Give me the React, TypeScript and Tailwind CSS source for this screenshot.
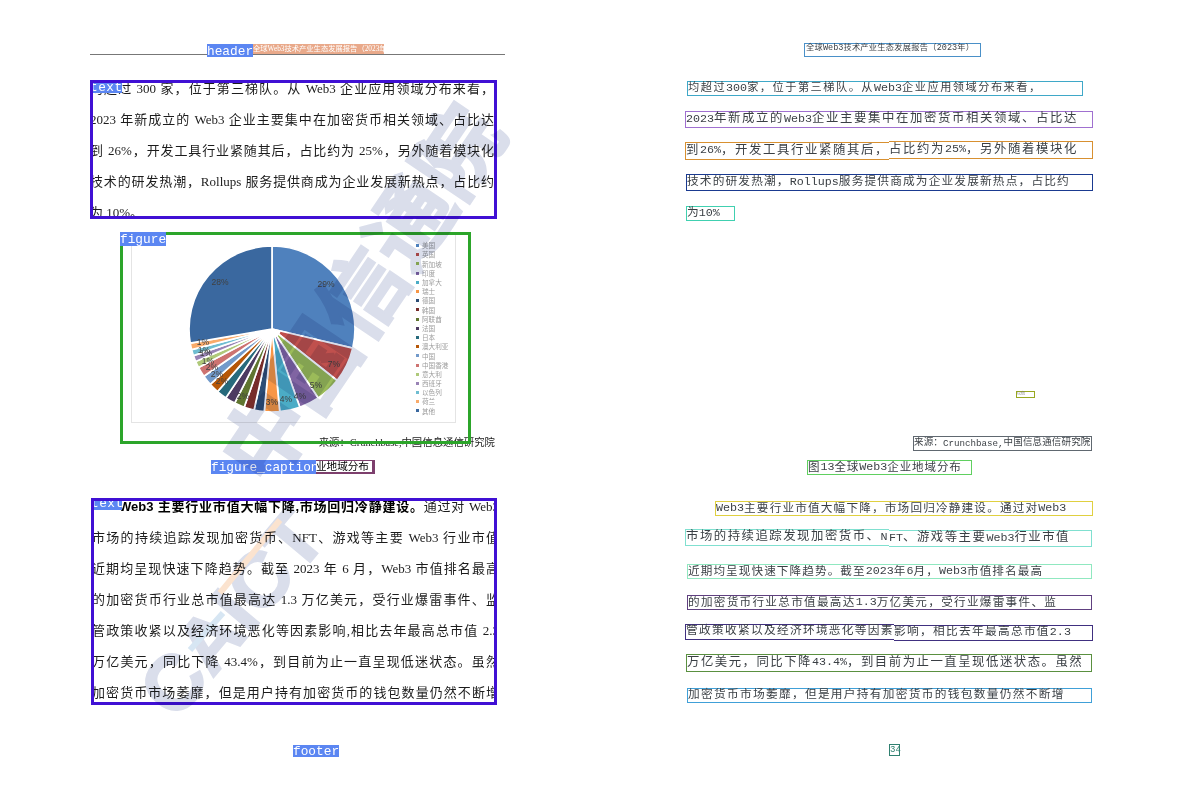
const BODY_FONT = "font-['Liberation_Serif','Noto_Sans_CJK_SC',serif]";
const MONO_FONT = "font-['Liberation_Mono','Noto_Sans_CJK_SC',monospace]";

const slices = [
  { pct: 29, color: "#4f81bd", label: "29%", lx: 54, ly: -42 },
  { pct: 7, color: "#c0504d", label: "7%", lx: 62, ly: 38 },
  { pct: 5, color: "#9bbb59", label: "5%", lx: 44, ly: 59 },
  { pct: 4, color: "#8064a2", label: "4%", lx: 28, ly: 70 },
  { pct: 4, color: "#4bacc6", label: "4%", lx: 14, ly: 73 },
  { pct: 3, color: "#f79646", label: "3%", lx: 0, ly: 76 },
  { pct: 2, color: "#2c4d75", label: "", lx: 0, ly: 0 },
  { pct: 2, color: "#772c2a", label: "", lx: 0, ly: 0 },
  { pct: 2, color: "#5f7530", label: "2%", lx: -29, ly: 70 },
  { pct: 2, color: "#4d3b62", label: "", lx: 0, ly: 0 },
  { pct: 2, color: "#276a7c", label: "", lx: 0, ly: 0 },
  { pct: 2, color: "#b65708", label: "2%", lx: -50, ly: 55 },
  { pct: 2, color: "#729aca", label: "2%", lx: -55, ly: 48 },
  { pct: 2, color: "#cd7371", label: "2%", lx: -60, ly: 41 },
  { pct: 1.3, color: "#afc97a", label: "1%", lx: -64, ly: 35 },
  { pct: 1.2, color: "#9983b5", label: "1%", lx: -66, ly: 27 },
  { pct: 1.2, color: "#6fbdd1", label: "1%", lx: -68, ly: 24 },
  { pct: 1.3, color: "#f9ab6b", label: "1%", lx: -69, ly: 16 },
  { pct: 28, color: "#3a689f", label: "28%", lx: -52, ly: -44 },
];

const legend = [
  { name: "美国", color: "#4f81bd" },
  { name: "英国", color: "#c0504d" },
  { name: "新加坡", color: "#9bbb59" },
  { name: "印度", color: "#8064a2" },
  { name: "加拿大", color: "#4bacc6" },
  { name: "瑞士", color: "#f79646" },
  { name: "德国", color: "#2c4d75" },
  { name: "韩国", color: "#772c2a" },
  { name: "阿联酋", color: "#5f7530" },
  { name: "法国", color: "#4d3b62" },
  { name: "日本", color: "#276a7c" },
  { name: "澳大利亚", color: "#b65708" },
  { name: "中国", color: "#729aca" },
  { name: "中国香港", color: "#cd7371" },
  { name: "意大利", color: "#afc97a" },
  { name: "西班牙", color: "#9983b5" },
  { name: "以色列", color: "#6fbdd1" },
  { name: "荷兰", color: "#f9ab6b" },
  { name: "其他", color: "#3a689f" },
];

function PieChart() {
  const total = slices.reduce((sum, s) => sum + s.pct, 0);
  const r = 83;
  let angle = 0;
  const paths = slices.map(s => {
    const start = angle;
    angle += (s.pct / total) * Math.PI * 2;
    const x1 = Math.sin(start) * r;
    const y1 = -Math.cos(start) * r;
    const x2 = Math.sin(angle) * r;
    const y2 = -Math.cos(angle) * r;
    const large = angle - start > Math.PI ? 1 : 0;
    return { color: s.color, d: `M0 0L${x1} ${y1}A${r} ${r} 0 ${large} 1 ${x2} ${y2}Z` };
  });
  // the thin slices fade into a white hub, the two big ones run right to the centre
  const hubFrom = (104 * Math.PI) / 180;
  const hubTo = (261 * Math.PI) / 180;
  const hub = 9;
  return (
    <svg width="170" height="170" viewBox="-85 -85 170 170" className="block">
      {paths.map(p => (
        <path key={p.d} d={p.d} fill={p.color} stroke="#ffffff" strokeWidth="1.7" />
      ))}
      <path
        d={`M0 0L${Math.sin(hubFrom) * hub} ${-Math.cos(hubFrom) * hub}A${hub} ${hub} 0 0 1 ${Math.sin(hubTo) * hub} ${-Math.cos(hubTo) * hub}Z`}
        fill="#ffffff"
      />
      {slices.map((s, i) =>
        s.label ? (
          <text key={i} x={s.lx} y={s.ly} textAnchor="middle" fontSize="8.5" fill="#404040" fontFamily="Liberation Sans">
            {s.label}
          </text>
        ) : null
      )}
    </svg>
  );
}

function Tag({ children, className }: { children: string; className: string }) {
  return (
    <span className={`${MONO_FONT} absolute z-10 bg-[#5b86f2] text-white text-[12.8px] ${className}`}>
      {children}
    </span>
  );
}

function JustLine({ children, className = "" }: { children: React.ReactNode; className?: string }) {
  return (
    <div className={`h-[31px] leading-[31px] text-justify [text-align-last:justify] whitespace-nowrap ${className}`}>
      {children}
    </div>
  );
}

function LeftPage() {
  return (
    <div className={`w-[415px] flex flex-col text-[13px] text-[#1c1c1c] ${BODY_FONT}`}>
      <div className="mt-[44px] h-[11px] border-b border-[#777777] flex pl-[117px]">
        <span className={`${MONO_FONT} h-[13px] w-[46px] bg-[#5b86f2] text-white text-[12.8px] leading-[15px] overflow-hidden`}>header</span>
        <span className="h-[10px] w-[131px] bg-[#e9a98a] text-white text-[7.3px] leading-[9px] text-center overflow-hidden whitespace-nowrap">
          全球Web3技术产业生态发展报告（2023年）
        </span>
      </div>

      <div className="relative mt-[25px] w-[407px] h-[139px] border-[3px] border-[#4010d4] overflow-hidden">
        <Tag className="w-[32px] h-[13px] -left-[3px] -top-[3px] leading-[15px] tracking-[0.5px]">text</Tag>
        <div className="-mt-[10px] -ml-[3px] w-[404px]">
          <JustLine>均超过 300 家，位于第三梯队。从 Web3 企业应用领域分布来看，</JustLine>
          <JustLine>2023 年新成立的 Web3 企业主要集中在加密货币相关领域、占比达</JustLine>
          <JustLine>到 26%，开发工具行业紧随其后，占比约为 25%，另外随着模块化</JustLine>
          <JustLine>技术的研发热潮，Rollups 服务提供商成为企业发展新热点，占比约</JustLine>
          <div className="h-[31px] leading-[31px]">为 10%。</div>
        </div>
      </div>

      <div className="relative mt-[13px] ml-[30px] w-[351px] h-[212px] border-[3px] border-[#2ca52a] pl-[8px]">
        <Tag className="w-[46px] h-[14px] -left-[3px] -top-[3px] leading-[16px]">figure</Tag>
        <div className="flex w-[325px] h-[188px] border-b border-r border-l border-[#e4e4e4] pl-[55px] pt-[9px]">
          <PieChart />
          <div className="ml-[59px] -mt-[3px] flex flex-col">
            {legend.map(item => (
              <div key={item.name} className="flex items-center h-[9.2px] gap-[3px] text-[6.6px] leading-none text-[#9c9c9c] font-['Noto_Sans_CJK_SC',sans-serif]">
                <span className="w-[3px] h-[3px]" style={{ backgroundColor: item.color }} />
                {item.name}
              </div>
            ))}
          </div>
        </div>
      </div>

      <div className="-mt-[7px] w-[405px] text-right text-[10.4px] leading-[12px] h-[12px] whitespace-nowrap text-[#222222]">
        来源：Crunchbase,中国信息通信研究院
      </div>

      <div className="mt-[11px] flex pl-[121px]">
        <span className={`${MONO_FONT} h-[14px] w-[105px] bg-[#5b86f2] text-white text-[12.8px] leading-[16px] overflow-hidden`}>figure_caption</span>
        <span className="h-[14px] w-[59px] bg-[#7d3f6d] pr-[3px] pt-[1px] overflow-hidden">
          <span className="block h-[11px] bg-white text-[10.6px] leading-[11px] whitespace-nowrap text-black">业地域分布</span>
        </span>
      </div>

      <div className="relative mt-[24px] ml-[1px] w-[406px] h-[207px] border-[3px] border-[#4010d4] overflow-hidden">
        <Tag className="w-[31px] h-[12px] -left-[3px] -top-[3px] leading-[12px] tracking-[0.5px]">text</Tag>
        <div className="-mt-[10px] -ml-[2px] w-[407px]">
          <JustLine className="pl-[27px]">
            <b className="font-['Liberation_Sans','Noto_Sans_CJK_SC',sans-serif] text-[#000000]">Web3 主要行业市值大幅下降,市场回归冷静建设。</b>通过对 Web3
          </JustLine>
          <JustLine>市场的持续追踪发现加密货币、NFT、游戏等主要 Web3 行业市值</JustLine>
          <JustLine>近期均呈现快速下降趋势。截至 2023 年 6 月，Web3 市值排名最高</JustLine>
          <JustLine>的加密货币行业总市值最高达 1.3 万亿美元，受行业爆雷事件、监</JustLine>
          <JustLine>管政策收紧以及经济环境恶化等因素影响,相比去年最高总市值 2.3</JustLine>
          <JustLine>万亿美元，同比下降 43.4%，到目前为止一直呈现低迷状态。虽然</JustLine>
          <JustLine>加密货币市场萎靡，但是用户持有加密货币的钱包数量仍然不断增</JustLine>
        </div>
      </div>

      <div className="mt-[40px] ml-[203px] w-[46px] h-[12px] bg-[#5b86f2]">
        <span className={`${MONO_FONT} block text-white text-[12.8px] leading-[14px] overflow-hidden h-[12px]`}>footer</span>
      </div>
    </div>
  );
}

// latin runs keep the plain mono pitch, only the CJK is spread out
function Spaced({ text, latin = "text-[11.7px]" }: { text: string; latin?: string }) {
  return (
    <>
      {text.split(/([A-Za-z0-9.,%]+)/).map((part, i) =>
        i % 2 ? (
          <span key={i} className={`${latin} tracking-normal`}>
            {part}
          </span>
        ) : (
          part
        )
      )}
    </>
  );
}

const LINE = "flex items-center whitespace-nowrap";

function RightPage() {
  return (
    <div className={`w-[410px] ml-[180px] flex flex-col text-[#3a3f44] ${MONO_FONT}`}>
      <div className={`${LINE} mt-[43px] ml-[119px] w-[177px] h-[14px] border border-[#4a90c8] text-[8.2px] tracking-[0.3px] pl-[1px] pb-[3px]`}>
        <Spaced text="全球Web3技术产业生态发展报告（2023年）" latin="text-[8.5px]" />
      </div>

      <div className={`${LINE} mt-[24px] ml-[2px] w-[396px] h-[15px] border border-[#3fa8c8] text-[11.2px] tracking-[1.5px]`}>
        <Spaced text="均超过300家，位于第三梯队。从Web3企业应用领域分布来看，" />
      </div>
      <div className={`${LINE} mt-[15px] w-[408px] h-[17px] border border-[#a070d0] text-[12.4px] tracking-[1.6px]`}>
        <Spaced text="2023年新成立的Web3企业主要集中在加密货币相关领域、占比达" />
      </div>
      <div className="mt-[13px] w-[408px] flex text-[12.4px] tracking-[1.6px]">
        <div className={`${LINE} w-[204px] h-[18px] mt-[1px] border border-r-0 border-[#d89030]`}>
          <Spaced text="到26%，开发工具行业紧随其后，" />
        </div>
        <div className={`${LINE} w-[204px] h-[18px] border border-l-0 border-[#d89030]`}>
          <Spaced text="占比约为25%，另外随着模块化" />
        </div>
      </div>
      <div className={`${LINE} mt-[14px] ml-[1px] w-[407px] h-[17px] border border-[#1a3a90] text-[11.7px] tracking-[1.15px]`}>
        <Spaced text="技术的研发热潮，Rollups服务提供商成为企业发展新热点，占比约" />
      </div>
      <div className={`${LINE} mt-[15px] ml-[1px] w-[49px] h-[15px] border border-[#40d0b0] text-[11.7px]`}>
        <Spaced text="为10%" />
      </div>

      <div className="mt-[170px] ml-[331px] w-[19px] h-[7px] border border-[#98a820] text-[4px] leading-[5px] whitespace-nowrap text-[#777777]">
        以色
      </div>

      <div className={`${LINE} mt-[38px] ml-[228px] w-[179px] h-[15px] border border-[#606870] text-[9.5px] tracking-[0.15px]`}>
        <Spaced text="来源：Crunchbase,中国信息通信研究院" latin="text-[9.2px]" />
      </div>
      <div className={`${LINE} mt-[9px] ml-[122px] w-[165px] h-[15px] border border-[#60d060] text-[11.5px] tracking-[0.9px]`}>
        <Spaced text="图13全球Web3企业地域分布" />
      </div>

      <div className={`${LINE} mt-[26px] ml-[30px] w-[378px] h-[15px] border border-[#e0d040] text-[11.6px] tracking-[1.2px]`}>
        <Spaced text="Web3主要行业市值大幅下降，市场回归冷静建设。通过对Web3" />
      </div>
      <div className="mt-[13px] w-[407px] flex text-[12.4px] tracking-[1.5px]">
        <div className={`${LINE} w-[204px] h-[17px] border border-r-0 border-[#80e0d0]`}>
          <Spaced text="市场的持续追踪发现加密货币、N" />
        </div>
        <div className={`${LINE} w-[203px] h-[17px] mt-[1px] border border-l-0 border-[#80e0d0]`}>
          <Spaced text="FT、游戏等主要Web3行业市值" />
        </div>
      </div>
      <div className={`${LINE} mt-[17px] ml-[2px] w-[405px] h-[15px] border border-[#90e8c0] text-[11.6px] tracking-[1.1px]`}>
        <Spaced text="近期均呈现快速下降趋势。截至2023年6月，Web3市值排名最高" />
      </div>
      <div className={`${LINE} mt-[16px] ml-[2px] w-[405px] h-[15px] border border-[#604080] text-[11.6px] tracking-[1.3px]`}>
        <Spaced text="的加密货币行业总市值最高达1.3万亿美元，受行业爆雷事件、监" />
      </div>
      <div className="mt-[14px] w-[408px] flex text-[11.7px] tracking-[1.3px]">
        <div className={`${LINE} w-[209px] h-[16px] border border-r-0 border-[#403080]`}>
          <Spaced text="管政策收紧以及经济环境恶化等因素" />
        </div>
        <div className={`${LINE} w-[199px] h-[16px] mt-[1px] border border-l-0 border-[#403080]`}>
          <Spaced text="影响，相比去年最高总市值2.3" />
        </div>
      </div>
      <div className={`${LINE} mt-[13px] ml-[1px] w-[406px] h-[18px] border border-[#5a9040] text-[12.4px] tracking-[1.5px]`}>
        <Spaced text="万亿美元，同比下降43.4%，到目前为止一直呈现低迷状态。虽然" />
      </div>
      <div className={`${LINE} mt-[16px] ml-[2px] w-[405px] h-[15px] border border-[#40a0d8] text-[11.7px] tracking-[1.3px]`}>
        <Spaced text="加密货币市场萎靡，但是用户持有加密货币的钱包数量仍然不断增" />
      </div>

      <div className="mt-[41px] ml-[204px] w-[11px] h-[12px] border border-[#308070] text-[9px] leading-[10px] text-center text-[#308070]">
        34
      </div>
    </div>
  );
}

// the diagonal CAICT stamp printed across the left page
function Watermark() {
  return (
    <svg width="520" height="808" viewBox="0 0 520 808" className="absolute left-0 top-0 z-20 mix-blend-multiply pointer-events-none">
      <text
        transform="translate(268 490) rotate(-56)"
        fontSize="86"
        fontWeight="700"
        fill="#dadeeb"
        stroke="#dadeeb"
        strokeWidth="2"
        fontFamily="Noto Sans CJK SC"
      >
        中国信通院
      </text>
      <text
        transform="translate(176 722) rotate(-50)"
        fontSize="78"
        fontWeight="700"
        fill="#dadeeb"
        stroke="#dadeeb"
        strokeWidth="2"
        fontFamily="Liberation Sans"
      >
        CAICT
      </text>
      <line x1="220" y1="593" x2="280" y2="520" stroke="#fbe3cf" strokeWidth="6" />
      <line x1="190" y1="650" x2="223" y2="613" stroke="#d7e6f3" strokeWidth="6" />
    </svg>
  );
}

export default function App() {
  return (
    <div className="relative flex w-[1192px] h-[808px] pl-[90px] bg-white overflow-hidden">
      <LeftPage />
      <RightPage />
      <Watermark />
    </div>
  );
}
